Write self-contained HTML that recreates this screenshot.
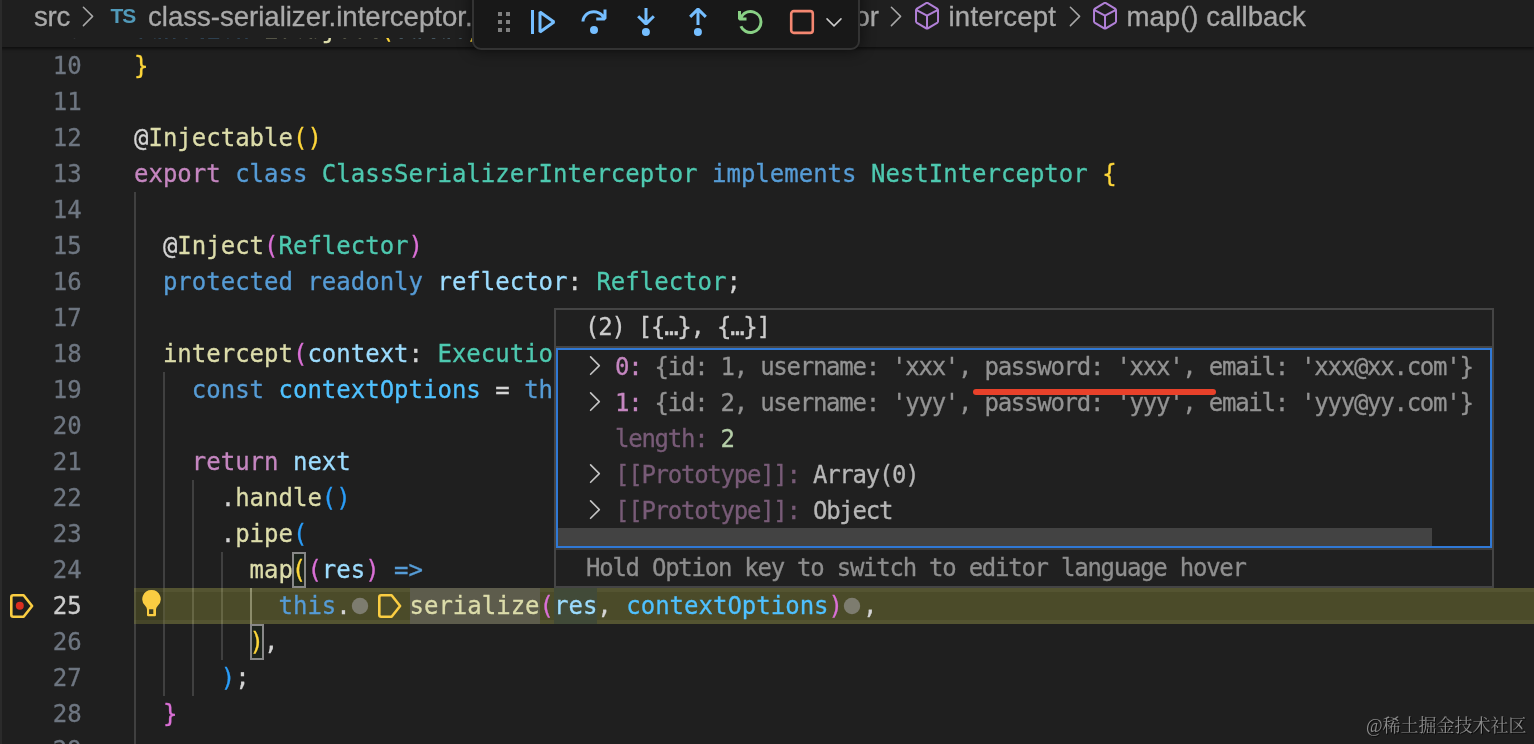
<!DOCTYPE html>
<html lang="en">
<head>
<meta charset="utf-8">
<title>class-serializer.interceptor.ts - debug</title>
<style>
html,body{margin:0;padding:0;}
body{width:1534px;height:744px;overflow:hidden;background:#1f1f1f;position:relative;
  font-family:"DejaVu Sans Mono","Liberation Mono",monospace;}
#app{will-change:transform;position:absolute;left:0;top:0;width:1534px;height:744px;overflow:hidden;background:#1f1f1f;}
.edge{position:absolute;left:0;top:0;width:2px;height:744px;background:#2b2b2b;}

/* ---------- code ---------- */
.ln{position:absolute;left:0;width:81.7px;-webkit-text-stroke:0.3px currentColor;text-align:right;height:36px;line-height:36px;
  font-size:24px;color:#6e7681;white-space:pre;}
.ln.cur{color:#cccccc;}
.cl{-webkit-text-stroke:0.3px currentColor;position:absolute;left:134px;height:36px;line-height:36px;font-size:24px;color:#d4d4d4;white-space:pre;letter-spacing:0;}
.k{color:#569cd6}.c{color:#c586c0}.t{color:#4ec9b0}.f{color:#dcdcaa}.v{color:#9cdcfe}.n{color:#4fc1ff}
.b1{color:#fdd63a}.b2{color:#da70d6}.b3{color:#2a9df8}.p{color:#d4d4d4}
.guide{position:absolute;width:2px;background:#404040;}
.guide.act{background:#707070;}
.curline{position:absolute;left:134px;top:588px;width:1400px;height:36px;background:rgba(255,253,86,0.2);box-sizing:border-box;border-top:4px solid rgba(255,255,200,0.055);border-bottom:4px solid rgba(255,255,200,0.055);}

.ibp{display:inline-block;width:20px;height:1px;}
.isf{display:inline-block;width:38.75px;height:1px;}
.hl{background:#5d5c4c;}
.hl2{background:#414a38;}
.deco{position:absolute;}
.match{box-shadow:inset 0 0 0 2px #888888;background:#1c231c;box-sizing:border-box;width:14.2px;margin-left:0.3px;text-indent:-0.3px;margin-right:-0.05px;}


/* ---------- top ---------- */
#top{position:absolute;left:0;top:0;width:1534px;height:47px;background:#1f1f1f;box-shadow:0 2px 3px rgba(0,0,0,0.55);}
#topclip{position:absolute;left:0;top:0;width:1534px;height:47px;overflow:hidden;}
.bc{position:absolute;top:0;height:36px;line-height:34px;font-family:"Liberation Sans",sans-serif;font-size:27.6px;color:#a9a9a9;white-space:pre;-webkit-text-stroke:0.3px #a9a9a9;}
.ts{position:absolute;left:110.5px;top:3.5px;font-family:"Liberation Sans",sans-serif;font-weight:bold;font-size:21px;line-height:24px;color:#519aba;letter-spacing:-1.2px;}

/* ---------- debug toolbar ---------- */
#dbg{position:absolute;left:472px;top:-12px;width:384px;height:58px;background:#181818;border:2px solid #333333;border-radius:9px;box-shadow:0 0 14px 2px rgba(0,0,0,0.45);}
#dbg svg{position:absolute;}

/* ---------- hover ---------- */
#hover{position:absolute;left:554px;top:308px;width:936px;height:276px;background:#202020;border:2px solid #454545;font-size:24px;letter-spacing:-1.255px;-webkit-text-stroke:0.3px currentColor;color:#cccccc;}
#hover .row{position:absolute;left:0;height:36px;line-height:36px;white-space:pre;}
#tree{position:absolute;left:0;top:38px;width:932px;height:196px;border:2px solid #3079d6;}
#hover .sep{position:absolute;left:0;width:936px;height:2px;background:#454545;}
#hover .tw{position:absolute;left:-27px;top:5px;}
.val{color:#b6b6b6}.status{color:#8e8e8e}
.redline{position:absolute;left:417px;top:78.5px;width:243px;height:6.6px;border-radius:3.3px;background:#e8412a;}
.key{color:#c586c0}.dim{color:#939393}.num{color:#b5cea8}.proto{color:#785b77}
.sbar{position:absolute;left:0;top:178px;width:874px;height:18px;background:#434343;}
.wm{position:absolute;right:7.5px;top:713px;font-family:"Liberation Serif","Noto Serif CJK SC",serif;font-size:18px;color:#8a8a8a;line-height:26px;text-shadow:1px 1px 0 rgba(0,0,0,0.7);white-space:pre;}
</style>
</head>
<body>
<div id="app">
<div class="edge"></div>

<!-- CODE -->
<div id="code">
<div class="guide" style="left:134px;top:192px;height:552px"></div>
<div class="guide" style="left:163px;top:372px;height:324px"></div>
<div class="guide" style="left:192px;top:480px;height:216px"></div>
<div class="guide" style="left:221px;top:552px;height:108px"></div>
<div class="guide act" style="left:250px;top:588px;height:36px"></div>
<div class="curline"></div>
<div style="position:absolute;left:134px;top:588px;width:31px;height:36px;background:rgba(0,0,0,0.16)"></div>

<div class="ln" style="top:48px">10</div>
<div class="ln" style="top:84px">11</div>
<div class="ln" style="top:120px">12</div>
<div class="ln" style="top:156px">13</div>
<div class="ln" style="top:192px">14</div>
<div class="ln" style="top:228px">15</div>
<div class="ln" style="top:264px">16</div>
<div class="ln" style="top:300px">17</div>
<div class="ln" style="top:336px">18</div>
<div class="ln" style="top:372px">19</div>
<div class="ln" style="top:408px">20</div>
<div class="ln" style="top:444px">21</div>
<div class="ln" style="top:480px">22</div>
<div class="ln" style="top:516px">23</div>
<div class="ln" style="top:552px">24</div>
<div class="ln cur" style="top:588px">25</div>
<div class="ln" style="top:624px">26</div>
<div class="ln" style="top:660px">27</div>
<div class="ln" style="top:696px">28</div>
<div class="ln" style="top:732px">29</div>

<div class="cl" style="top:48px"><span class="b1">}</span></div>
<div class="cl" style="top:120px">@<span class="f">Injectable</span><span class="b1">()</span></div>
<div class="cl" style="top:156px"><span class="c">export</span> <span class="k">class</span> <span class="t">ClassSerializerInterceptor</span> <span class="k">implements</span> <span class="t">NestInterceptor</span> <span class="b1">{</span></div>
<div class="cl" style="top:228px">  @<span class="f">Inject</span><span class="b2">(</span><span class="t">Reflector</span><span class="b2">)</span></div>
<div class="cl" style="top:264px">  <span class="k">protected</span> <span class="k">readonly</span> <span class="v">reflector</span>: <span class="t">Reflector</span>;</div>
<div class="cl" style="top:336px">  <span class="f">intercept</span><span class="b2">(</span><span class="v">context</span>: <span class="t">ExecutionContext</span>, <span class="v">next</span>: <span class="t">CallHandler</span><span class="b2">)</span>: <span class="t">Observable</span></div>
<div class="cl" style="top:372px">    <span class="k">const</span> <span class="n">contextOptions</span> = <span class="k">this</span>.<span class="f">getContextOptions</span><span class="b3">(</span><span class="v">context</span><span class="b3">)</span>;</div>
<div class="cl" style="top:444px">    <span class="c">return</span> <span class="v">next</span></div>
<div class="cl" style="top:480px">      .<span class="f">handle</span><span class="b3">()</span></div>
<div class="cl" style="top:516px">      .<span class="f">pipe</span><span class="b3">(</span></div>
<div class="cl" style="top:552px">        <span class="f">map</span><span class="b1 match" style="display:inline-block;height:36px;vertical-align:top;margin-left:-0.9px;margin-right:1.15px">(</span><span class="b2">(</span><span class="v">res</span><span class="b2">)</span> <span class="k">=&gt;</span></div>
<div class="cl" style="top:588px">          <span class="k">this</span>.<span class="ibp"></span><span class="isf"></span><span class="f hl" style="display:inline-block;height:36px;vertical-align:top">serialize</span><span class="b2">(</span><span class="v hl2" style="display:inline-block;height:36px;vertical-align:top">res</span>, <span class="n">contextOptions</span><span class="b2">)</span><span class="ibp"></span>,</div>
<div class="cl" style="top:624px">        <span class="b1 match" style="display:inline-block;height:36px;vertical-align:top">)</span>,</div>
<div class="cl" style="top:660px">      <span class="b3">)</span>;</div>
<div class="cl" style="top:696px">  <span class="b2">}</span></div>
<!-- glyph margin + inline decorations -->
<svg class="deco" style="left:10px;top:594px" width="24" height="24" viewBox="0 0 24 24"><path d="M3.2 1.3 H13.6 L22.1 12 L13.6 22.7 H3.2 Q1.3 22.7 1.3 20.8 V3.2 Q1.3 1.3 3.2 1.3 Z" fill="none" stroke="#facd42" stroke-width="2.6" stroke-linejoin="round"/><circle cx="9.8" cy="11.8" r="4" fill="#db2f20"/></svg>
<svg class="deco" style="left:378px;top:594px" width="24" height="24" viewBox="0 0 24 24"><path d="M3.2 1.3 H13.6 L22.1 12 L13.6 22.7 H3.2 Q1.3 22.7 1.3 20.8 V3.2 Q1.3 1.3 3.2 1.3 Z" fill="none" stroke="#facd42" stroke-width="2.6" stroke-linejoin="round"/></svg>
<svg class="deco" style="left:351px;top:597px" width="18" height="18" viewBox="0 0 18 18"><circle cx="9" cy="9" r="8.2" fill="#7d7c6f"/></svg>
<svg class="deco" style="left:843px;top:597px" width="18" height="18" viewBox="0 0 18 18"><circle cx="9" cy="9" r="8.2" fill="#7d7c6f"/></svg>
<svg class="deco" style="left:141px;top:589px" width="22" height="28" viewBox="0 0 22 28"><path fill="#facd42" d="M10.5 1 A9.1 9.1 0 0 1 16.6 16.9 Q15 18.4 15 20.4 V26 Q15 27.2 13.8 27.2 H7.2 Q6 27.2 6 26 V20.4 Q6 18.4 4.4 16.9 A9.1 9.1 0 0 1 10.5 1 Z M8.1 20.3 V25 H12.3 V20.3 Z" fill-rule="evenodd"/></svg>
</div>

<!-- TOP -->
<div id="top"><div id="topclip">
<div class="cl" id="sticky" style="left:0;top:12px;width:1534px;height:36px;"><span class="ln" style="top:0">8</span><span style="position:absolute;left:134px;top:0"><span class="k">function</span> <span class="f">isObject</span><span class="b1">(</span><span class="v">value</span><span class="b1">)</span>: <span class="v">value</span> <span class="k">is</span> <span class="t">object</span> <span class="b1">{</span></span></div>
<div id="bcbar" style="position:absolute;left:0;top:0;width:1534px;height:38px;background:#1f1f1f;">
<span class="bc" id="bc1" style="left:34px;letter-spacing:-0.3px">src</span>
<svg style="position:absolute;left:80px;top:5px" width="16" height="24" viewBox="0 0 16 24"><path d="M3.4 2.2 L12.6 11.4 L3.4 20.6" fill="none" stroke="#a8a8a8" stroke-width="1.5" stroke-linecap="round" stroke-linejoin="round"/></svg>
<span class="ts">TS</span>
<span class="bc" id="bc2" style="left:148px;letter-spacing:-0.02px">class-serializer.interceptor.ts</span>
<span class="bc" id="bc3" style="right:655px;letter-spacing:0px">ClassSerializerInterceptor</span>
<svg style="position:absolute;left:888px;top:5px" width="16" height="24" viewBox="0 0 16 24"><path d="M3.4 2.2 L12.6 11.4 L3.4 20.6" fill="none" stroke="#a8a8a8" stroke-width="1.5" stroke-linecap="round" stroke-linejoin="round"/></svg>
<svg style="position:absolute;left:911px;top:0px" width="32" height="32" viewBox="0 0 16 16"><path fill="#b180d7" d="M13.51 4l-5-3h-1l-5 3-.49.86v6l.49.85 5 3h1l5-3 .49-.85v-6L13.51 4zm-6 9.56l-4.5-2.7V5.7l4.5 2.45v5.41zM3.27 4.7l4.74-2.84 4.74 2.84-4.74 2.59L3.27 4.7zm9.74 6.16l-4.5 2.7V8.15l4.5-2.45v5.16z"/></svg>
<span class="bc" id="bc4" style="left:948.5px;letter-spacing:0.2px">intercept</span>
<svg style="position:absolute;left:1067px;top:5px" width="16" height="24" viewBox="0 0 16 24"><path d="M3.4 2.2 L12.6 11.4 L3.4 20.6" fill="none" stroke="#a8a8a8" stroke-width="1.5" stroke-linecap="round" stroke-linejoin="round"/></svg>
<svg style="position:absolute;left:1089px;top:0px" width="32" height="32" viewBox="0 0 16 16"><path fill="#b180d7" d="M13.51 4l-5-3h-1l-5 3-.49.86v6l.49.85 5 3h1l5-3 .49-.85v-6L13.51 4zm-6 9.56l-4.5-2.7V5.7l4.5 2.45v5.41zM3.27 4.7l4.74-2.84 4.74 2.84-4.74 2.59L3.27 4.7zm9.74 6.16l-4.5 2.7V8.15l4.5-2.45v5.16z"/></svg>
<span class="bc" id="bc5" style="left:1126.5px;letter-spacing:0px">map() callback</span>
</div>
</div></div>
<div class="edge"></div>

<!-- DEBUG TOOLBAR -->
<div id="dbg">
<svg style="left:14px;top:16px" width="32" height="32" viewBox="0 0 16 16"><path fill="#7f7f7f" d="M5 3h2v2H5zm0 4h2v2H5zm0 4h2v2H5zm4-8h2v2H9zm0 4h2v2H9zm0 4h2v2H9z"/></svg>
<svg style="left:52px;top:16px" width="32" height="32" viewBox="0 0 16 16"><path fill="#75beff" d="M2.5 2H4v12H2.5V2zm4.936.39L6.25 3v10l1.186.61 7-5V7.39l-7-5zM12.71 8l-4.96 3.543V4.457L12.71 8z"/></svg>
<svg style="left:104px;top:16px" width="32" height="32" viewBox="0 0 16 16"><path fill="#75beff" d="M14.25 5.75v-4h-1.5v2.542c-1.145-1.359-2.911-2.209-4.84-2.209-3.177 0-5.92 2.307-6.16 5.398l-.02.269h1.501l.022-.226c.212-2.195 2.202-3.94 4.656-3.94 1.736 0 3.244.875 4.05 2.166h-2.83v1.5h4.163l.962-.975V5.75h-.004zM8 14a2 2 0 1 0 0-4 2 2 0 0 0 0 4z"/></svg>
<svg style="left:156px;top:16px" width="32" height="32" viewBox="0 0 16 16"><path fill="#75beff" d="M8 9.532h.542l3.905-3.905-1.061-1.06-2.637 2.61V1H7.251v6.177l-2.637-2.61-1.061 1.06 3.905 3.905H8zm1.956 3.481a2 2 0 1 1-4 0 2 2 0 0 1 4 0z"/></svg>
<svg style="left:208px;top:16px" width="32" height="32" viewBox="0 0 16 16"><path fill="#75beff" d="M8 1h-.542L3.553 4.905l1.061 1.06 2.637-2.61v6.177h1.498V3.355l2.637 2.61 1.061-1.06L8.542 1H8zm1.956 12.013a2 2 0 1 1-4 0 2 2 0 0 1 4 0z"/></svg>
<svg style="left:260px;top:16px" width="32" height="32" viewBox="0 0 16 16"><path fill="#89d185" d="M12.75 8a4.5 4.5 0 0 1-8.61 1.834l-1.391.565A6.001 6.001 0 0 0 14.25 8 6 6 0 0 0 3.5 4.334V2.500H2v4l.75.75h3.5v-1.5H4.352A4.5 4.5 0 0 1 12.75 8z"/></svg>
<svg style="left:312px;top:16px" width="32" height="32" viewBox="0 0 32 32"><rect x="5.2" y="5.1" width="21.6" height="21.8" rx="2.6" fill="none" stroke="#f48771" stroke-width="2.6"/></svg>
<svg style="left:348px;top:24px" width="24" height="16" viewBox="0 0 24 16"><path d="M5 4.9 L12 11.9 L19 4.9" fill="none" stroke="#cccccc" stroke-width="1.5" stroke-linecap="round" stroke-linejoin="round"/></svg>
</div>

<!-- HOVER -->
<div id="hover">
<div class="row" style="top:-1px;left:29px">(2) [{…}, {…}]</div>
<div class="sep" style="top:36px"></div>
<div id="tree">
<div class="row" style="top:-1px;left:57px"><svg class="tw" width="16" height="24" viewBox="0 0 16 24"><path d="M2.6 2.9 L11.3 11.6 L2.6 20.3" fill="none" stroke="#c5c5c5" stroke-width="1.6" stroke-linecap="round" stroke-linejoin="round"/></svg><span class="key">0:</span> <span class="dim">{id: 1, username: 'xxx', password: 'xxx', email: 'xxx@xx.com'}</span></div>
<div class="row" style="top:35px;left:57px"><svg class="tw" width="16" height="24" viewBox="0 0 16 24"><path d="M2.6 2.9 L11.3 11.6 L2.6 20.3" fill="none" stroke="#c5c5c5" stroke-width="1.6" stroke-linecap="round" stroke-linejoin="round"/></svg><span class="key">1:</span> <span class="dim">{id: 2, username: 'yyy', password: 'yyy', email: 'yyy@yy.com'}</span></div>
<div class="row" style="top:71px;left:57px"><span class="proto">length:</span> <span class="num">2</span></div>
<div class="row" style="top:107px;left:57px"><svg class="tw" width="16" height="24" viewBox="0 0 16 24"><path d="M2.6 2.9 L11.3 11.6 L2.6 20.3" fill="none" stroke="#c5c5c5" stroke-width="1.6" stroke-linecap="round" stroke-linejoin="round"/></svg><span class="proto">[[Prototype]]:</span> <span class="val">Array(0)</span></div>
<div class="row" style="top:143px;left:57px"><svg class="tw" width="16" height="24" viewBox="0 0 16 24"><path d="M2.6 2.9 L11.3 11.6 L2.6 20.3" fill="none" stroke="#c5c5c5" stroke-width="1.6" stroke-linecap="round" stroke-linejoin="round"/></svg><span class="proto">[[Prototype]]:</span> <span class="val">Object</span></div>
<div class="sbar"></div>
</div>
<div class="sep" style="top:238px;background:#3c3c3c"></div>
<div class="row status" style="top:240px;left:30px">Hold Option key to switch to editor language hover</div>
<div class="redline"></div>
</div>

<div class="wm">@稀土掘金技术社区</div>
</div>
</body>
</html>
